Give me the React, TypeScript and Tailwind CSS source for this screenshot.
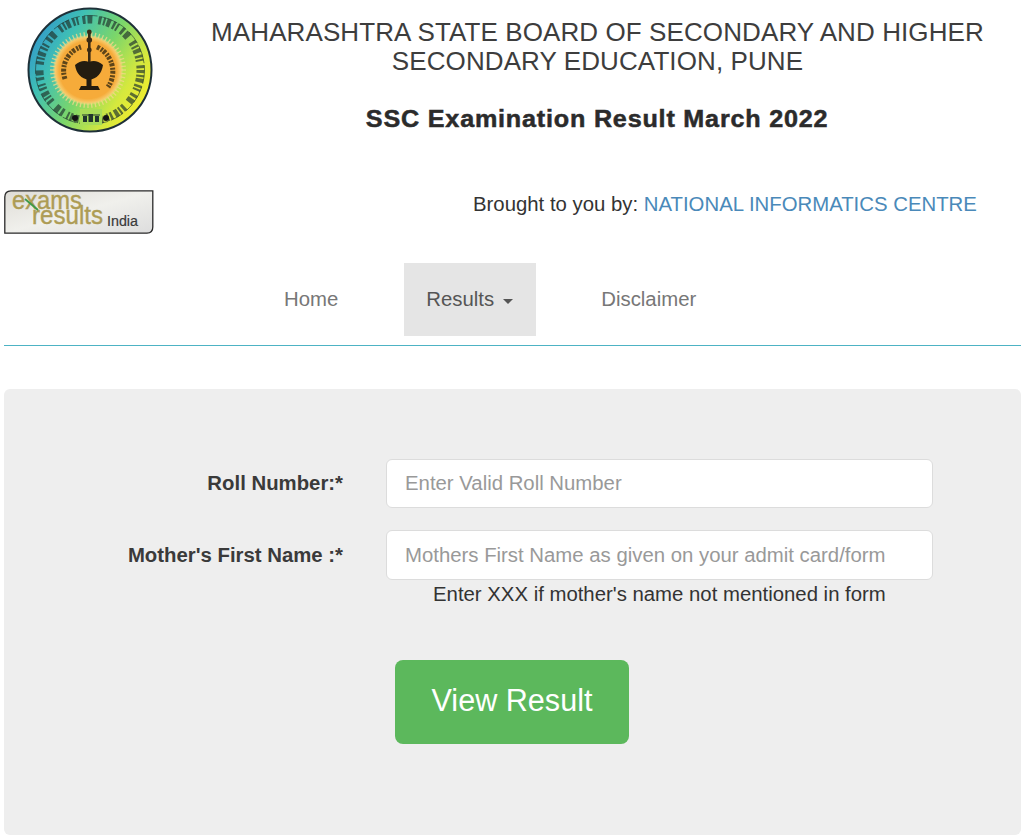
import React from "react";

function Emblem() {
  const rays = Array.from({ length: 60 }, (_, i) => (i * 360) / 60);
  return (
    <svg width="130" height="130" viewBox="0 0 130 130" aria-hidden="true">
      <defs>
        <linearGradient id="ring" x1="0" y1="0.15" x2="1" y2="0.75">
          <stop offset="0" stopColor="#2f8fd0" />
          <stop offset="0.28" stopColor="#3fc0b4" />
          <stop offset="0.55" stopColor="#7bd66a" />
          <stop offset="0.8" stopColor="#d5e83e" />
          <stop offset="1" stopColor="#f6ee2a" />
        </linearGradient>
        <radialGradient id="burst" cx="0.5" cy="0.5" r="0.5">
          <stop offset="0.82" stopColor="#f6ab3a" />
          <stop offset="0.93" stopColor="#f7c868" />
          <stop offset="1" stopColor="#f4e08c" stopOpacity="0.2" />
        </radialGradient>
      </defs>
      <circle cx="65" cy="65" r="61.5" fill="url(#ring)" stroke="#1e3038" strokeWidth="2" />
      <circle cx="65" cy="65" r="50.5" fill="none" stroke="#20352e" strokeWidth="8" strokeDasharray="3 2 2 1.5 4 2.5 2.5 1.5 2 4 3 2 5 6" opacity="0.68" />
      <circle cx="65" cy="65" r="54.5" fill="none" stroke="#20352e" strokeWidth="1" strokeDasharray="14 3 18 2 9 4" opacity="0.6" />
      {rays.map((a) => (
        <line key={a} x1="63" y1="27" x2="63" y2="33" stroke="#f5d98a" strokeWidth="1.3" opacity="0.8" transform={`rotate(${a} 63 65)`} />
      ))}
      <circle cx="63" cy="65" r="35" fill="url(#burst)" />
      <rect x="55" y="104" width="22" height="16" fill="#a8dc58" />
      <circle cx="50" cy="113" r="3" fill="#141414" />
      <circle cx="81" cy="113" r="3" fill="#141414" />
      <path d="M58 111 h4 v6 h-4 z M63.5 109 h4.5 v8 h-4.5 z M70 111 h4 v6 h-4 z M57 109.5 h18 v1 h-18 z" fill="#20352e" />
      <path d="M40 74 A25 25 0 0 1 56 42" fill="none" stroke="#4e3a16" strokeWidth="5" strokeDasharray="3 1.5 2 1" opacity="0.9" />
      <path d="M72 42 A27 27 0 0 1 83 82" fill="none" stroke="#4e3a16" strokeWidth="5" strokeDasharray="3 1.5 2 1" opacity="0.9" />
      <rect x="63" y="25" width="2.6" height="32" fill="#3a2a14" />
      <circle cx="64.3" cy="27" r="2.4" fill="#3a2a14" />
      <circle cx="64.3" cy="35" r="2.8" fill="#3a2a14" />
      <circle cx="64.3" cy="45" r="2.4" fill="#3a2a14" />
      <path d="M50 60 Q57 54 64 57 Q71 54 78 60 Q76 73 64 75 Q52 73 50 60 Z" fill="#241c10" />
      <path d="M56 81 h17 l2 4 h-21 z" fill="#241c10" />
      <rect x="61.5" y="74" width="5" height="8" fill="#241c10" />
    </svg>
  );
}

function ExamsLogo() {
  const face = "'Liberation Sans', sans-serif";
  return (
    <svg width="150" height="44" viewBox="0 0 150 44" aria-hidden="true">
      <defs>
        <linearGradient id="plate" x1="0" y1="0" x2="1" y2="1">
          <stop offset="0" stopColor="#dedcd6" />
          <stop offset="0.5" stopColor="#f0f0ec" />
          <stop offset="1" stopColor="#dddddd" />
        </linearGradient>
      </defs>
      <path d="M7 0.8 H148.8 V37 Q148.8 43 143 43.2 H0.8 V7 Q0.8 1 7 0.8 Z" fill="url(#plate)" stroke="#2a2a2a" strokeWidth="1.3" />
      <text x="8" y="19" fontFamily={face} fontSize="25" fill="#ad9c55" stroke="#ad9c55" strokeWidth="0.4" textLength="70" lengthAdjust="spacingAndGlyphs">exams</text>
      <text x="28" y="34" fontFamily={face} fontSize="25" fill="#ad9c55" stroke="#ad9c55" strokeWidth="0.4" textLength="71" lengthAdjust="spacingAndGlyphs">results</text>
      <line x1="21" y1="9" x2="34" y2="20" stroke="#3c9a4a" strokeWidth="1.8" />
      <text x="103" y="36" fontFamily={face} fontSize="14" fill="#3a3a3a" stroke="#3a3a3a" strokeWidth="0.2" textLength="31" lengthAdjust="spacingAndGlyphs">India</text>
    </svg>
  );
}

export default function App() {
  const label = "w-[339px] text-right text-[20.35px] font-bold text-[#3a3a3a]";
  return (
    <div className="h-[838px] w-[1024px] overflow-hidden bg-white font-['Liberation_Sans',Arial,sans-serif] text-[#333333]">
      <header className="flex h-[190px] items-start">
        <div className="ml-[25px] mt-[5px] w-[130px]">
          <Emblem />
        </div>
        <div className="ml-[16px] w-[853px] pt-[18px] text-center">
          <h1 className="text-[26px] leading-[29px] tracking-[0.1px] text-[#3d3d3d]">
            MAHARASHTRA STATE BOARD OF SECONDARY AND HIGHER
            <br />
            SECONDARY EDUCATION, PUNE
          </h1>
          <h2 className="mt-[28px] inline-block scale-x-[1.07] text-[23.5px] leading-[30px] font-bold tracking-[0.75px] text-[#2b2b2b] [-webkit-text-stroke:0.5px_#2b2b2b]">
            SSC Examination Result March 2022
          </h2>
        </div>
      </header>

      <div className="flex h-[73px] items-start pl-[4px]">
        <ExamsLogo />
        <p className="ml-[319px] text-[20.35px] leading-[28px] text-[#333333]">
          Brought to you by: <span className="text-[#4a89b9]">NATIONAL INFORMATICS CENTRE</span>
        </p>
      </div>

      <nav className="mx-[4px] flex h-[82px] w-[1017px] pl-[258px] text-[20.35px] text-[#777777]">
        <a className="flex h-[73px] items-center px-[22px]">Home</a>
        <a className="ml-[44px] flex h-[73px] w-[132px] items-center gap-[9px] bg-[#e5e5e5] pl-[22px] text-[#555555]">
          Results
          <span className="mt-[3px] h-0 w-0 border-x-[5px] border-t-[5px] border-x-transparent border-t-[#555555]" />
        </a>
        <a className="ml-[43px] flex h-[73px] items-center px-[22px]">Disclaimer</a>
      </nav>
      <div className="mx-[4px] h-px w-[1017px] bg-[#4db3c4]" />

      <main className="ml-[4px] mt-[43px] h-[446px] w-[1017px] rounded-[6px] bg-[#eeeeee] pt-[70px]">
        <div className="flex items-center">
          <label className={label}>Roll Number:*</label>
          <div className="ml-[43px] flex h-[49px] w-[547px] items-center rounded-[6px] border border-[#dcdcdc] bg-white pl-[18px] text-[20.35px] text-[#999999]">
            Enter Valid Roll Number
          </div>
        </div>
        <div className="mt-[22px] flex items-center">
          <label className={label}>Mother's First Name :*</label>
          <div className="ml-[43px] flex h-[50px] w-[547px] items-center rounded-[6px] border border-[#dcdcdc] bg-white pl-[18px] text-[20.35px] text-[#999999]">
            Mothers First Name as given on your admit card/form
          </div>
        </div>
        <p className="ml-[429px] text-[20.35px] leading-[28px] text-[#333333]">
          Enter XXX if mother's name not mentioned in form
        </p>
        <button className="ml-[391px] mt-[52px] flex h-[84px] w-[234px] items-center justify-center rounded-[8px] bg-[#5cb85c] pb-[2px] text-[30.6px] text-white">
          View Result
        </button>
      </main>
    </div>
  );
}
